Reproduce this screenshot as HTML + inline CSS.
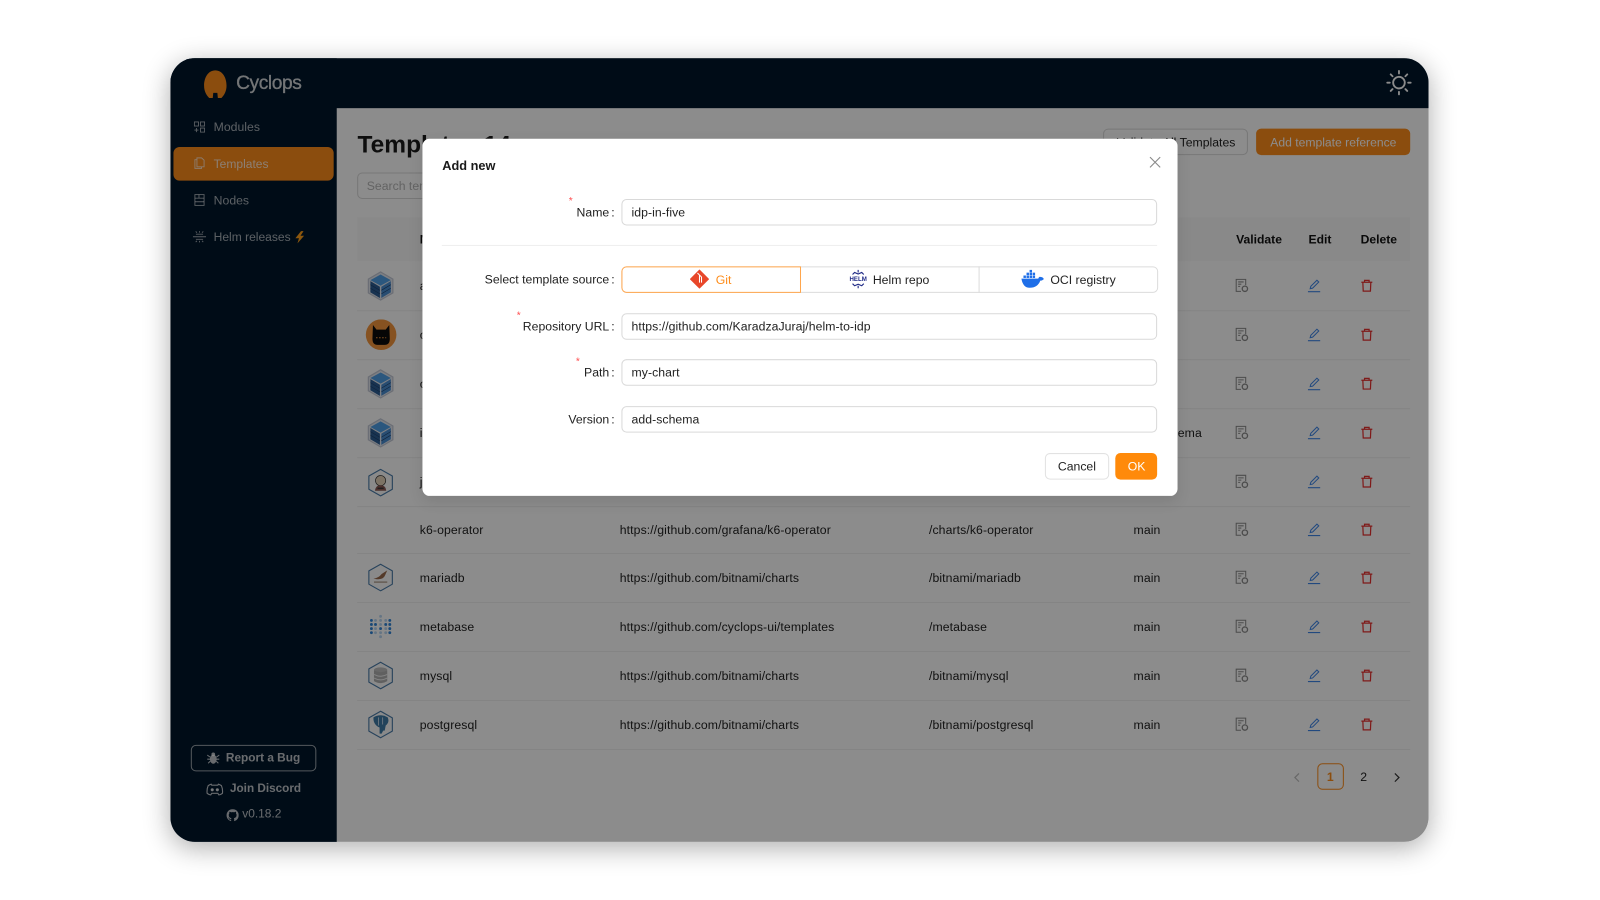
<!DOCTYPE html>
<html><head><meta charset="utf-8"><title>Cyclops Templates</title>
<style>
html,body{margin:0;padding:0;background:#fff;width:1600px;height:900px;overflow:hidden}
*{box-sizing:border-box}
#s{position:absolute;left:0;top:0;width:1568px;height:882px;transform:scale(1.0204);transform-origin:0 0;font-family:"Liberation Sans",sans-serif;font-size:12px;color:#222}
.a{position:absolute}
.t{position:absolute;line-height:16px;white-space:nowrap;transform:translateY(calc(-50% + .4px))}
.u{letter-spacing:.09px}
#f{position:absolute;left:167.400px;top:57px;width:1233px;height:767.600px;border-radius:24px;box-shadow:0 6px 26px rgba(0,0,0,.32)}
#c{position:absolute;left:167.400px;top:57px;width:1233px;height:767.600px;border-radius:24px;overflow:hidden;background:#fff}
.abs{position:absolute;left:-167px;top:-57px;width:1568px;height:882px}
.side{color:rgba(255,255,255,.65)}
.sep{position:absolute;left:350px;width:1032px;height:1px;background:#f0f0f0}
.inp{position:absolute;left:609px;width:525px;background:#fff;border:1px solid #d9d9d9;border-radius:5px;padding-left:8.500px;color:#222;font-size:12px;letter-spacing:.05px;display:flex;align-items:center}
.lbl{position:absolute;right:966px;line-height:16px;transform:translateY(-50%);white-space:nowrap;color:#222}
.lbl i{font-style:normal;margin-left:2px}
.star{position:absolute;color:#ff4d4f;font-size:10px;line-height:10px}
.h{font-weight:700}
</style></head>
<body>
<svg width="0" height="0" style="position:absolute">
<defs>
<symbol id="cube" viewBox="0 0 30 30">
<path d="M15 1.500 27 8.500V22L15 29 3 22V8.500Z" fill="#e4e7ee" stroke="#c3c9d6" stroke-width="1.200"/>
<path d="M15 4 25 9.500 15 15 5 9.500Z" fill="#4f9fe6"/>
<path d="M5 10.500 14.300 16V27L5 21.500Z" fill="#2c5d94"/>
<path d="M25 10.500 15.700 16V27L25 21.500Z" fill="#4a8dd0"/>
<path d="M5 14 14.300 19.500M5 17.500 14.300 23M25 14 15.700 19.500M25 17.500 15.700 23" stroke="#1e426e" stroke-width=".6" fill="none"/>
</symbol>
<symbol id="hex" viewBox="0 0 30 30">
<path d="M15 2 26.500 8.500V21.500L15 28 3.500 21.500V8.500Z" fill="#fbfbfb" stroke="#4a7ba8" stroke-width="1.100" stroke-linejoin="round"/>
</symbol>
<symbol id="val" viewBox="0 0 14 14" fill="none" stroke="#8a8a8a" stroke-width="1">
<path d="M6.200 12.600H1.500V.8H10.800V6.400"/><path d="M3.400 3.300H8.800M3.400 5.500H6.500M3.400 7.700H5.400"/><circle cx="10" cy="10" r="2.600" stroke-width="1.300"/>
</symbol>
<symbol id="edit" viewBox="0 0 14 14" fill="none" stroke="#3f86e8" stroke-width="1">
<path d="M.8 12.900H12.800" stroke-width="1.100"/><path d="M3 9.900 3.600 7.600 9.600 1.600 11.400 3.400 5.400 9.400Z"/>
</symbol>
<symbol id="del" viewBox="0 0 14 14" fill="none" stroke="#e8312f" stroke-width="1.300">
<path d="M1.200 3.400H12.800M4.600 3.200V1.400H9.400V3.200M2.800 3.600 3.200 12.700H10.800L11.200 3.600"/>
</symbol>
<symbol id="rowic" viewBox="0 0 140 14" overflow="visible">
<use href="#val" x="0" y="0" width="14" height="14"/>
<use href="#edit" x="71" y="0" width="14" height="14"/>
<use href="#del" x="123" y="0" width="13" height="14"/>
</symbol>
</defs>
</svg>
<div id="s">
<div id="f"></div>
<div id="c"><div class="abs">
<div class="a" style="left:330px;top:106px;width:1070px;height:720px;background:#fff"></div>
<div class="t h" style="left:350px;top:142px;font-size:24px;line-height:30px;color:#1a1a1a">Templates 14</div>
<div class="a" style="left:350px;top:169px;width:250px;height:26px;border:1px solid #d9d9d9;border-radius:5px"></div>
<div class="t" style="left:359px;top:182px;color:#b5b5b5">Search templates</div>
<div class="a" style="left:1081px;top:126px;width:142px;height:26px;border:1px solid #d9d9d9;border-radius:5px"></div>
<div class="t" style="left:1094px;top:139px;color:#222">Validate All Templates</div>
<div class="a" style="left:1231px;top:126px;width:151px;height:26px;background:#fe8c1a;border-radius:5px"></div>
<div class="t" style="left:1244.500px;top:139px;color:#fff;font-size:11.900px">Add template reference</div>
<div class="a" style="left:350px;top:213px;width:1032px;height:43px;background:#fafafa"></div>
<div class="t h" style="left:411px;top:234px;color:#111">Name</div>
<div class="t h" style="left:1211px;top:233.500px;color:#111;font-size:11.900px">Validate</div>
<div class="t h" style="left:1282px;top:233.500px;color:#111;font-size:11.900px">Edit</div>
<div class="t h" style="left:1333px;top:233.500px;color:#111;font-size:11.900px">Delete</div>
<div class="sep" style="top:304px"></div><div class="sep" style="top:352px"></div><div class="sep" style="top:400px"></div><div class="sep" style="top:448px"></div><div class="sep" style="top:496px"></div><div class="sep" style="top:542px"></div><div class="sep" style="top:590px"></div><div class="sep" style="top:638px"></div><div class="sep" style="top:686px"></div><div class="sep" style="top:734px"></div>

<svg class="a" style="left:358px;top:265px" width="30" height="30"><use href="#cube"/></svg>
<svg class="a" style="left:358px;top:313px" width="32" height="30" viewBox="0 0 32 30"><circle cx="15.500" cy="15" r="15" fill="#f5963c"/><path d="M7.500 5.500 11 10H20L23.500 5.500 24 19Q24 25 19 25H12Q7 25 7 19Z" fill="#0b0b0b"/><path d="M10.500 18H20.500" stroke="#f5963c" stroke-width="1" stroke-dasharray="1.500 1.500"/></svg>
<svg class="a" style="left:358px;top:361px" width="30" height="30"><use href="#cube"/></svg>
<svg class="a" style="left:358px;top:409px" width="30" height="30"><use href="#cube"/></svg>
<svg class="a" style="left:358px;top:457.500px" width="30" height="30" viewBox="0 0 30 30"><use href="#hex"/><circle cx="15" cy="13" r="5" fill="#e3d2b8" stroke="#333" stroke-width=".7"/><path d="M9.500 23Q10 17.500 15 17.500T20.500 23Z" fill="#8a5a55"/><path d="M12 20.500H18" stroke="#333" stroke-width="1.300"/></svg>
<svg class="a" style="left:358px;top:551px" width="30" height="30" viewBox="0 0 30 30"><use href="#hex"/><path d="M8 16Q13 15.500 16 11.500L21.500 8 19.500 12.500Q17.500 17.500 10.500 16.500Z" fill="#9a6a4c"/><path d="M8.500 19.500H21.500" stroke="#b9a89a" stroke-width="1.500"/></svg>
<svg class="a" style="left:360px;top:601px" width="26" height="26" viewBox="0 0 26 26">
<g fill="#2f84d8"><circle cx="4" cy="7" r="1.400"/><circle cx="4" cy="11" r="1.400"/><circle cx="4" cy="15" r="1.400"/><circle cx="4" cy="19" r="1.400"/><circle cx="8" cy="11" r="1.400"/><circle cx="13" cy="15" r="1.400"/><circle cx="18" cy="11" r="1.400"/><circle cx="22" cy="7" r="1.400"/><circle cx="22" cy="11" r="1.400"/><circle cx="22" cy="15" r="1.400"/><circle cx="22" cy="19" r="1.400"/></g>
<g fill="#b8d5f1"><circle cx="13" cy="3" r="1.400"/><circle cx="13" cy="7" r="1.400"/><circle cx="13" cy="11" r="1.400"/><circle cx="8" cy="7" r="1.400"/><circle cx="18" cy="7" r="1.400"/><circle cx="8" cy="15" r="1.400"/><circle cx="18" cy="15" r="1.400"/><circle cx="8" cy="19" r="1.400"/><circle cx="18" cy="19" r="1.400"/><circle cx="13" cy="19" r="1.400"/><circle cx="13" cy="23" r="1.400"/></g></svg>
<svg class="a" style="left:358px;top:647px" width="30" height="30" viewBox="0 0 30 30"><use href="#hex"/><ellipse cx="15" cy="9.500" rx="6.500" ry="2.500" fill="#bdbdbd"/><path d="M8.500 10V20.500Q15 24.500 21.500 20.500V10Q15 13.500 8.500 10Z" fill="#b0b0b0"/><path d="M8.500 14Q15 17.500 21.500 14M8.500 17.500Q15 21 21.500 17.500" stroke="#eee" fill="none"/></svg>
<svg class="a" style="left:358px;top:695px" width="30" height="30" viewBox="0 0 30 30"><use href="#hex"/><path d="M8 8Q15 4 22 8 24 13 20 16L19 21H17.500L16 24H14V18Q7.500 15 8 8Z" fill="#3f7aa6"/><path d="M13 8V16M17 8V15" stroke="#d6e3ef" stroke-width=".8"/></svg>

<div class="t" style="left:411px;top:280px">argo-cd</div><div class="t" style="left:411px;top:328px">cyclops</div><div class="t" style="left:411px;top:376px">cron</div><div class="t" style="left:411px;top:424px">idp</div><div class="t" style="left:411px;top:472px">jenkins</div>
<div class="t u" style="left:1110.500px;top:424px">add-schema</div>

<div class="t u" style="left:411px;top:519px">k6-operator</div><div class="t u" style="left:607px;top:519px">https://github.com/grafana/k6-operator</div><div class="t u" style="left:910px;top:519px">/charts/k6-operator</div><div class="t u" style="left:1110.500px;top:519px">main</div>
<div class="t u" style="left:411px;top:566px">mariadb</div><div class="t u" style="left:607px;top:566px">https://github.com/bitnami/charts</div><div class="t u" style="left:910px;top:566px">/bitnami/mariadb</div><div class="t u" style="left:1110.500px;top:566px">main</div>
<div class="t u" style="left:411px;top:614px">metabase</div><div class="t u" style="left:607px;top:614px">https://github.com/cyclops-ui/templates</div><div class="t u" style="left:910px;top:614px">/metabase</div><div class="t u" style="left:1110.500px;top:614px">main</div>
<div class="t u" style="left:411px;top:662px">mysql</div><div class="t u" style="left:607px;top:662px">https://github.com/bitnami/charts</div><div class="t u" style="left:910px;top:662px">/bitnami/mysql</div><div class="t u" style="left:1110.500px;top:662px">main</div>
<div class="t u" style="left:411px;top:710px">postgresql</div><div class="t u" style="left:607px;top:710px">https://github.com/bitnami/charts</div><div class="t u" style="left:910px;top:710px">/bitnami/postgresql</div><div class="t u" style="left:1110.500px;top:710px">main</div>

<svg class="a" style="left:1209.600px;top:273.300px;overflow:visible" width="140" height="14"><use href="#rowic"/></svg>
<svg class="a" style="left:1209.600px;top:321.300px;overflow:visible" width="140" height="14"><use href="#rowic"/></svg>
<svg class="a" style="left:1209.600px;top:369.300px;overflow:visible" width="140" height="14"><use href="#rowic"/></svg>
<svg class="a" style="left:1209.600px;top:417.300px;overflow:visible" width="140" height="14"><use href="#rowic"/></svg>
<svg class="a" style="left:1209.600px;top:465.300px;overflow:visible" width="140" height="14"><use href="#rowic"/></svg>
<svg class="a" style="left:1209.600px;top:512.300px;overflow:visible" width="140" height="14"><use href="#rowic"/></svg>
<svg class="a" style="left:1209.600px;top:559.300px;overflow:visible" width="140" height="14"><use href="#rowic"/></svg>
<svg class="a" style="left:1209.600px;top:607.300px;overflow:visible" width="140" height="14"><use href="#rowic"/></svg>
<svg class="a" style="left:1209.600px;top:655.300px;overflow:visible" width="140" height="14"><use href="#rowic"/></svg>
<svg class="a" style="left:1209.600px;top:703.300px;overflow:visible" width="140" height="14"><use href="#rowic"/></svg>

<svg class="a" style="left:1265.500px;top:756.500px" width="10" height="10" viewBox="0 0 10 10" fill="none" stroke="#bdbdbd" stroke-width="1.200"><path d="M7 1 3 5 7 9"/></svg>
<div class="a" style="left:1290.300px;top:748px;width:26px;height:26px;border:1px solid #fe8c1a;border-radius:5px"></div>
<div class="t" style="left:1290.300px;top:761px;width:26px;text-align:center;color:#fe8c1a;font-weight:700">1</div>
<div class="t" style="left:1323px;top:761px;width:26px;text-align:center;color:#222">2</div>
<svg class="a" style="left:1363.500px;top:756.500px" width="10" height="10" viewBox="0 0 10 10" fill="none" stroke="#333" stroke-width="1.200"><path d="M3 1 7 5 3 9"/></svg>

<div class="a" style="left:167px;top:57px;width:163px;height:769px;background:#00172b"></div>
<div class="a" style="left:167px;top:57px;width:1233px;height:49px;background:#00172b"></div>
<svg class="a" style="left:198.500px;top:67.500px" width="24" height="29" viewBox="0 0 24 29"><path d="M12 1C5 1 1 8 1 16 1 21 3 25 6 28H9.500L10 23H14L14.500 28H18C21 25 23 21 23 16 23 8 19 1 12 1Z" fill="#fe8c1a"/></svg>
<div class="t" style="left:231px;top:80.500px;font-size:18.800px;line-height:24px;color:#fff;letter-spacing:-.4px;opacity:.82;-webkit-text-stroke:.3px #fff">Cyclops</div>
<svg class="a" style="left:1358px;top:68px" width="26" height="26" viewBox="0 0 26 26" fill="none" stroke="#fff" stroke-width="1.800" stroke-linecap="round"><circle cx="13" cy="13" r="5.700"/><path d="M13 1.500V4M13 22V24.500M1.500 13H4M22 13H24.500M4.900 4.900 6.700 6.700M19.300 19.300 21.100 21.100M4.900 21.100 6.700 19.300M19.300 6.700 21.100 4.900"/></svg>
<div class="a" style="left:170px;top:144px;width:157px;height:33px;background:#fe8c1a;border-radius:6px"></div>
<svg class="a" style="left:190px;top:119px" width="11" height="11" viewBox="0 0 11 11" fill="none" stroke="rgba(255,255,255,.65)" stroke-width=".9"><rect x=".5" y=".5" width="4" height="4"/><rect x="6.500" y=".5" width="4" height="4"/><rect x="6.500" y="6.500" width="4" height="4"/><path d="M.5 8.500H4.500M2.500 6.500V10.500"/></svg>
<div class="t side" style="left:209px;top:124px">Modules</div>
<svg class="a" style="left:190px;top:154px" width="11" height="12" viewBox="0 0 11 12" fill="none" stroke="rgba(255,255,255,.75)" stroke-width=".9"><path d="M3 2.500H1V11H7.500V9.500M3 .7H7.500L10 3V9.500H3Z"/></svg>
<div class="t side" style="left:209px;top:160px;color:rgba(255,255,255,.8);font-size:11.800px">Templates</div>
<svg class="a" style="left:190px;top:190px" width="11" height="12" viewBox="0 0 11 12" fill="none" stroke="rgba(255,255,255,.65)" stroke-width=".9"><rect x="1" y=".7" width="9" height="10.600"/><path d="M1 4.200H10M1 7.700H10M5 .7V4.200"/></svg>
<div class="t side" style="left:209px;top:196px">Nodes</div>
<svg class="a" style="left:189px;top:226px" width="13" height="12" viewBox="0 0 13 12" fill="none" stroke="rgba(255,255,255,.65)" stroke-width=".9"><path d="M0 6H13M3 3.500H10M3 8.500H10M4 2 2.800 .8M9 2 10.200 .8M6.500 2V.5M4 10 2.800 11.200M9 10 10.200 11.200M6.500 10V11.500"/></svg>
<div class="t side" style="left:209px;top:232px;font-size:11.800px">Helm releases</div>
<svg class="a" style="left:287.500px;top:225.500px" width="11" height="13" viewBox="0 0 11 13"><path d="M7 .5 1.500 7.500H5L3.500 12.500 10 5H6.500L9.500 .5Z" fill="#fe9f1a"/></svg>
<div class="a" style="left:187px;top:730px;width:122.500px;height:26px;border:1px solid rgba(255,255,255,.6);border-radius:5px"></div>
<svg class="a" style="left:203px;top:737px" width="12" height="12" viewBox="0 0 12 12" fill="rgba(255,255,255,.75)"><ellipse cx="6" cy="7" rx="3.300" ry="4.500"/><circle cx="6" cy="2.300" r="1.800"/><path d="M0 3 3 5M12 3 9 5M0 7H3M9 7H12M1 11 3 9M11 11 9 9" stroke="rgba(255,255,255,.75)" fill="none"/></svg>
<div class="t side" style="left:221px;top:743px;font-weight:700;color:rgba(255,255,255,.75);font-size:11.600px">Report a Bug</div>
<svg class="a" style="left:202px;top:767px" width="17" height="13" viewBox="0 0 17 13" fill="none" stroke="rgba(255,255,255,.75)" stroke-width="1.100"><path d="M5 1.500Q3 2 2 3 .5 6.500 1 10.500 3 12 4.500 12L5.500 10.500H11.500L12.500 12Q14 12 16 10.500 16.500 6.500 15 3 14 2 12 1.500L11.500 2.500H5.500Z"/><circle cx="6" cy="7" r="1" fill="rgba(255,255,255,.75)"/><circle cx="11" cy="7" r="1" fill="rgba(255,255,255,.75)"/></svg>
<div class="t side" style="left:225px;top:773px;font-weight:700;color:rgba(255,255,255,.75);font-size:11.500px">Join Discord</div>
<svg class="a" style="left:222px;top:792.500px" width="12" height="12" viewBox="0 0 16 16"><path d="M8 0C3.580 0 0 3.580 0 8c0 3.540 2.290 6.530 5.470 7.590.4.070.55-.17.55-.38 0-.19-.01-.82-.01-1.490-2.010.37-2.530-.49-2.690-.94-.09-.23-.48-.94-.82-1.130-.28-.15-.68-.52-.01-.53.63-.01 1.080.58 1.230.82.72 1.210 1.870.87 2.330.66.070-.52.28-.87.51-1.070-1.780-.2-3.640-.89-3.640-3.950 0-.87.31-1.590.82-2.150-.08-.2-.36-1.020.08-2.120 0 0 .67-.21 2.200.82.64-.18 1.320-.27 2-.27s1.360.09 2 .27c1.530-1.040 2.200-.82 2.200-.82.44 1.100.16 1.920.08 2.120.51.56.82 1.270.82 2.150 0 3.070-1.870 3.750-3.650 3.950.29.25.54.73.54 1.480 0 1.070-.01 1.930-.01 2.200 0 .21.15.46.55.38A8.013 8.013 0 0 0 16 8c0-4.420-3.580-8-8-8z" fill="rgba(255,255,255,.75)"/></svg>
<div class="t side" style="left:237px;top:798px;color:rgba(255,255,255,.75);font-size:11.700px">v0.18.2</div>

<div class="a" style="left:0;top:0;width:1568px;height:882px;background:rgba(0,0,0,.45)"></div>

<div class="a" style="left:414px;top:136px;width:740px;height:350px;background:#fff;border-radius:7px;box-shadow:0 5px 14px rgba(0,0,0,.1)"></div>
<div class="t" style="left:433px;top:162px;font-size:12.500px;color:#1a1a1a;font-weight:700">Add new</div>
<svg class="a" style="left:1125.500px;top:152.500px" width="12" height="12" viewBox="0 0 12 12" fill="none" stroke="#8a8a8a" stroke-width="1.100"><path d="M1 1 11 11M11 1 1 11"/></svg>

<div class="star" style="left:557px;top:193px">*</div>
<div class="lbl" style="top:207.500px">Name<i>:</i></div>
<div class="inp" style="top:194.500px;height:26px">idp-in-five</div>
<div class="a" style="left:433px;top:240px;width:701px;height:1px;background:#eeeeee"></div>

<div class="lbl" style="top:273.500px">Select template source<i>:</i></div>
<div class="a" style="left:608.500px;top:260.500px;width:526px;height:26px;border:1px solid #dcdcdc;border-radius:5px"></div>
<div class="a" style="left:959px;top:260.500px;width:1px;height:26px;background:#dcdcdc"></div>
<div class="a" style="left:608.500px;top:260.500px;width:176px;height:26px;border:1px solid #ffa64d;border-radius:5px 0 0 5px;background:#fff"></div>
<svg class="a" style="left:676px;top:264px" width="19" height="19" viewBox="0 0 19 19"><path d="M9.500 .7 18.300 9.500 9.500 18.300 .7 9.500Z" fill="#e8472a" stroke="#e8472a" stroke-linejoin="round"/><path d="M7.500 3.500 11.500 7.500V13M9.500 5.500V13" stroke="#fff" stroke-width="1" fill="none"/></svg>
<div class="t" style="left:701px;top:273.500px;color:#fe8c1a">Git</div>
<svg class="a" style="left:832px;top:264px" width="18" height="19" viewBox="0 0 18 19" fill="none" stroke="#1f2a86" stroke-width="1.100"><path d="M3.500 5 5.500 3 9 4.500 12.500 3 14.500 5M3.500 14 5.500 16 9 14.500 12.500 16 14.500 14M9 .5V3M9 16V18.500"/><text x="9" y="11.500" text-anchor="middle" font-family="Liberation Sans" font-size="6" font-weight="700" fill="#1f2a86" stroke="none">HELM</text></svg>
<div class="t" style="left:855px;top:273.500px">Helm repo</div>
<svg class="a" style="left:1000px;top:264px" width="24" height="19" viewBox="0 0 24 19"><path d="M1 9H17.500Q18.500 6.500 20 7.500 22 7.500 23 9.500 21.500 11 19.500 11 17 18 9 18 2.500 18 1 9Z" fill="#1f6fe8"/><g fill="#1f6fe8"><rect x="3" y="6" width="2.400" height="2.400"/><rect x="6" y="6" width="2.400" height="2.400"/><rect x="9" y="6" width="2.400" height="2.400"/><rect x="12" y="6" width="2.400" height="2.400"/><rect x="6" y="3.200" width="2.400" height="2.400"/><rect x="9" y="3.200" width="2.400" height="2.400"/><rect x="12" y="3.200" width="2.400" height="2.400"/><rect x="9" y=".5" width="2.400" height="2.400"/></g></svg>
<div class="t" style="left:1029px;top:273.500px">OCI registry</div>

<div class="star" style="left:506px;top:305px">*</div>
<div class="lbl" style="top:319.500px">Repository URL<i>:</i></div>
<div class="inp" style="top:306.500px;height:26px">https://github.com/KaradzaJuraj/helm-to-idp</div>
<div class="star" style="left:564px;top:350px">*</div>
<div class="lbl" style="top:365px">Path<i>:</i></div>
<div class="inp" style="top:352px;height:26px">my-chart</div>
<div class="lbl" style="top:410.500px">Version<i>:</i></div>
<div class="inp" style="top:397.500px;height:26px">add-schema</div>

<div class="a" style="left:1023.500px;top:443.500px;width:63px;height:26.500px;border:1px solid #e2e2e2;border-radius:5px;background:#fff;text-align:center;line-height:25px;color:#222">Cancel</div>
<div class="a" style="left:1093px;top:443.500px;width:41px;height:26.500px;border-radius:5px;background:#ff8a0a;text-align:center;line-height:26.500px;color:#fff">OK</div>
</div></div>
</div>
</body></html>
